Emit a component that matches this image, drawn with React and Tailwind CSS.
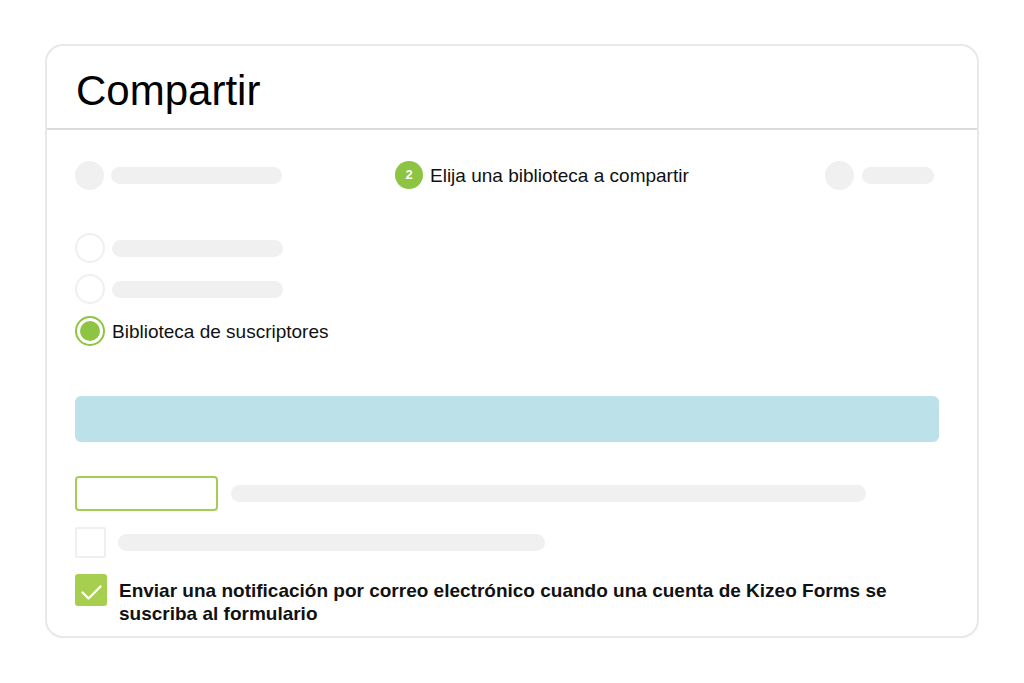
export default function App() {
  const font = { fontFamily: '"Liberation Sans", Arial, sans-serif' };
  return (
    <div className="w-[1024px] h-[683px] bg-white pt-[44px] pl-[45px]" style={font}>
      <div className="w-[934px] h-[594px] rounded-[18px] border-2 border-[#e8e8e8] bg-white overflow-hidden">
        {/* Header */}
        <div className="h-[84px] border-b-2 border-[#dadada] pl-[29px] pt-[24px]">
          <h1 className="text-[42px] leading-[42px] text-black">Compartir</h1>
        </div>

        <div className="pl-[28px] pr-[38px]">
          {/* Steps */}
          <div className="mt-[30px] flex h-[30px] items-center">
            <div className="flex w-[320px] items-center gap-[7px]">
              <div className="h-[29px] w-[29px] rounded-full bg-[#f0f0f0]" />
              <div className="h-[17px] w-[171px] rounded-full bg-[#f0f0f0]" />
            </div>
            <div className="flex w-[430px] items-center gap-[7px]">
              <div className="flex h-[28px] w-[28px] items-center justify-center rounded-full bg-[#8dc441] text-[13px] font-bold text-white">
                2
              </div>
              <span className="text-[19px] leading-[23px] text-[#111]">Elija una biblioteca a compartir</span>
            </div>
            <div className="flex items-center gap-[8px]">
              <div className="h-[29px] w-[29px] rounded-full bg-[#f0f0f0]" />
              <div className="h-[17px] w-[72px] rounded-full bg-[#f0f0f0]" />
            </div>
          </div>

          {/* Radios */}
          <div className="mt-[43px] flex flex-col gap-[11px]">
            <div className="flex h-[30px] items-center gap-[7px]">
              <div className="h-[30px] w-[30px] rounded-full border-2 border-[#efefef] bg-white" />
              <div className="h-[17px] w-[171px] rounded-full bg-[#f0f0f0]" />
            </div>
            <div className="flex h-[30px] items-center gap-[7px]">
              <div className="h-[30px] w-[30px] rounded-full border-2 border-[#efefef] bg-white" />
              <div className="h-[17px] w-[171px] rounded-full bg-[#f0f0f0]" />
            </div>
            <div className="mt-[1px] flex h-[30px] items-center gap-[7px]">
              <div className="flex h-[30px] w-[30px] items-center justify-center rounded-full border-2 border-[#8dc441] bg-white">
                <div className="h-[20px] w-[20px] rounded-full bg-[#8dc441]" />
              </div>
              <span className="text-[19px] leading-[23px] text-[#111]">Biblioteca de suscriptores</span>
            </div>
          </div>

          {/* Blue bar */}
          <div className="mt-[50px] h-[46px] w-[864px] rounded-[6px] bg-[#bce1e8]" />

          {/* Input row */}
          <div className="mt-[34px] flex h-[35px] items-center gap-[13px]">
            <div className="h-[35px] w-[143px] rounded-[4px] border-2 border-[#a3cd55] bg-white" />
            <div className="h-[17px] w-[635px] rounded-full bg-[#f0f0f0]" />
          </div>

          {/* Empty checkbox */}
          <div className="mt-[16px] flex h-[31px] items-center gap-[12px]">
            <div className="h-[31px] w-[31px] rounded-[2px] border-2 border-[#efefef] bg-white" />
            <div className="h-[17px] w-[427px] rounded-full bg-[#f0f0f0]" />
          </div>

          {/* Checked */}
          <div className="mt-[16px] flex items-start gap-[12px]">
            <div className="flex h-[32px] w-[32px] shrink-0 items-center justify-center rounded-[3px] bg-[#a6cf50]">
              <svg width="32" height="32" viewBox="0 0 32 32" fill="none">
                <polyline points="7.5,18.5 13.5,24.5 25.5,12.5" stroke="white" strokeWidth="2.4" strokeLinecap="round" strokeLinejoin="round" />
              </svg>
            </div>
            <p className="mt-[5px] text-[19px] font-bold leading-[23px] text-[#111]">
              Enviar una notificación por correo electrónico cuando una cuenta de Kizeo Forms se suscriba al formulario
            </p>
          </div>
        </div>
      </div>
    </div>
  );
}
